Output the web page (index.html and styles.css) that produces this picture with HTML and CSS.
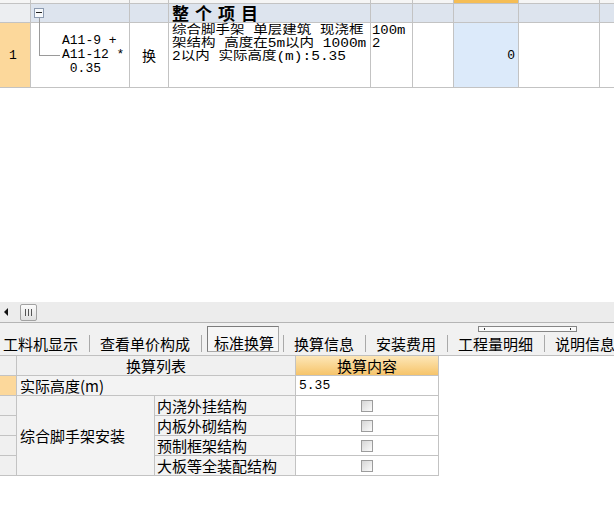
FILE: index.html
```html
<!DOCTYPE html>
<html>
	<head>
		<meta charset="utf-8">
		<title>标准换算</title>

		<link rel="stylesheet" href="styles.css">
	</head>

	<body>
		<div class="gridArea">
			<div class="grid">
				<!-- header row, scrolled almost out of view -->
				<div class="cell head"></div>
				<div class="cell head"></div>
				<div class="cell head"></div>
				<div class="cell head"></div>
				<div class="cell head"></div>
				<div class="cell head"></div>
				<div class="cell head sel"></div>
				<div class="cell head"></div>
				<div class="cell head"></div>

				<!-- group row -->
				<div class="cell group groupNum"></div>
				<div class="cell group"><span class="fold"></span></div>
				<div class="cell group"></div>
				<div class="cell group title">整个项目</div>
				<div class="cell group"></div>
				<div class="cell group"></div>
				<div class="cell group"></div>
				<div class="cell group"></div>
				<div class="cell group"></div>

				<!-- item row -->
				<div class="cell rowNum">1</div>
				<div class="cell code">A11-9 +
A11-12 *
 0.35</div>
				<div class="cell mark">换</div>
				<div class="cell name"><span class="wideText">综合脚手架 单层建筑 现浇框<br>架结构 高度在5m以内 1000m<br>2以内 实际高度(m):5.35</span></div>
				<div class="cell unit"><span class="wideText">100m<br>2</span></div>
				<div class="cell"></div>
				<div class="cell qty">0</div>
				<div class="cell"></div>
				<div class="cell"></div>
			</div>
		</div>

		<div class="hscroll">
			<span class="arrowLeft"></span>
			<div class="thumb"><span></span><span></span><span></span></div>
		</div>

		<div class="tabbar">
			<div class="tab first">工料机显示</div>
			<div class="sep"></div>
			<div class="tab">查看单价构成</div>
			<div class="sep"></div>
			<div class="tab active">标准换算</div>
			<div class="sep"></div>
			<div class="tab">换算信息</div>
			<div class="sep"></div>
			<div class="tab">安装费用</div>
			<div class="sep"></div>
			<div class="tab">工程量明细</div>
			<div class="sep"></div>
			<div class="tab">说明信息</div>
			<div class="grip"></div>
		</div>

		<div class="calc">
			<div class="rn"></div>
			<div class="hd wide">换算列表</div>
			<div class="hd orange">换算内容</div>

			<div class="rn cur"></div>
			<div class="lab wide">实际高度(m)</div>
			<div class="val">5.35</div>

			<div class="rn"></div>
			<div class="lab big">综合脚手架安装</div>
			<div class="sub">内浇外挂结构</div>
			<div class="chk"><span class="box"></span></div>

			<div class="rn"></div>
			<div class="sub">内板外砌结构</div>
			<div class="chk"><span class="box"></span></div>

			<div class="rn"></div>
			<div class="sub">预制框架结构</div>
			<div class="chk"><span class="box"></span></div>

			<div class="rn"></div>
			<div class="sub">大板等全装配结构</div>
			<div class="chk"><span class="box"></span></div>
		</div>
	</body>
</html>
```

FILE: styles.css
```css
body {
	margin: 0;
	width: 614px;
	height: 509px;
	overflow: hidden;
	background-color: #fff;
	color: #000;
	font-family: "Noto Sans CJK SC", sans-serif;
	font-size: 13px;
}

/* top grid */
.gridArea {
	height: 302px;
	overflow: hidden;
}

.grid {
	display: grid;
	grid-template-columns: 31px 99px 39px 202px 42px 41px 65px 81px 40px;
	grid-template-rows: 4px 19px 65px;
	width: 640px;
	font-family: "Liberation Mono", "Noto Sans CJK SC", monospace;
	font-size: 13px;
}

.cell {
	box-sizing: border-box;
	border-right: 1px solid #c3c3c3;
	border-bottom: 1px solid #c3c3c3;
}

.head {
	background-color: #f5f5f5;
}

.head.sel {
	background-color: #f5bd55;
}

.group {
	display: flex;
	align-items: center;
	background-color: #dde4ee;
}

.groupNum {
	background-color: #eceef1;
}

.fold {
	position: relative;
	width: 10px;
	height: 10px;
	margin-left: 3px;
	box-sizing: border-box;
	border: 1px solid #8d9bb0;
	background-color: #f7f9fb;
}

.fold::after {
	content: "";
	position: absolute;
	left: 1px;
	top: 3px;
	width: 6px;
	height: 1px;
	background-color: #222;
}

.title {
	padding-left: 3px;
	font-family: "Noto Sans CJK SC", sans-serif;
	font-size: 17px;
	font-weight: bold;
	letter-spacing: 6px;
	line-height: 18px;
}

.rowNum {
	display: flex;
	align-items: center;
	padding-left: 9px;
	background-color: #fcd89b;
}

.code {
	position: relative;
	display: flex;
	align-items: center;
	padding-left: 31px;
	white-space: pre;
	line-height: 14px;
}

/* tree connector from the group box */
.code::before {
	content: "";
	position: absolute;
	left: 8px;
	top: -5px;
	width: 20px;
	height: 37px;
	border-left: 1px solid #9a9a9a;
	border-bottom: 1px solid #9a9a9a;
}

.mark {
	display: flex;
	align-items: center;
	justify-content: center;
	font-size: 14px;
}

.name {
	padding: 2px 3px;
	font-size: 12.5px;
	line-height: 13px;
	white-space: nowrap;
}

/* the grid font is drawn wide and short */
.wideText {
	display: block;
	transform: scaleX(1.16);
	transform-origin: 0 0;
}

.unit {
	padding: 2px 1px;
	font-size: 12px;
	line-height: 13px;
}

.qty {
	display: flex;
	align-items: center;
	justify-content: flex-end;
	padding-right: 3px;
	background-color: #dceafa;
}

/* horizontal scrollbar */
.hscroll {
	display: flex;
	align-items: center;
	height: 20px;
	padding-left: 4px;
	background-color: #ececec;
	border-bottom: 1px solid #b5b5b5;
}

.arrowLeft {
	width: 0;
	height: 0;
	border-top: 4px solid transparent;
	border-bottom: 4px solid transparent;
	border-right: 4px solid #111;
}

.thumb {
	display: flex;
	align-items: center;
	justify-content: center;
	gap: 2px;
	width: 17px;
	height: 17px;
	margin-left: 12px;
	box-sizing: border-box;
	border: 1px solid #a2a2a2;
	border-radius: 2px;
	background: linear-gradient(#fbfbfb, #e0e0e0);
}

.thumb span {
	width: 1px;
	height: 7px;
	background-color: #555;
}

/* tabs */
.tabbar {
	position: relative;
	display: flex;
	align-items: flex-end;
	height: 33px;
	box-sizing: border-box;
	padding-bottom: 3px;
	background-color: #f1f1f1;
	border-bottom: 1px solid #c0c0c0;
	font-size: 15px;
	line-height: 16px;
	white-space: nowrap;
}

.tab {
	padding: 0 11px 0 10px;
}

.tab.first {
	padding-left: 3px;
}

.tab.active {
	margin: 0 4px 0 5px;
	padding: 8px 4px 0 6px;
	border: 1px solid #a8a8a8;
	border-top-color: #7c7c7c;
	border-left-color: #7c7c7c;
	background-color: #f6f6f6;
}

.sep {
	flex: none;
	width: 1px;
	height: 17px;
	background-color: #a9a9a9;
}

.grip {
	position: absolute;
	left: 478px;
	top: 3px;
	width: 99px;
	height: 6px;
	box-sizing: border-box;
	border: 1px solid #858585;
	background-color: #fafafa;
}

.grip::before,
.grip::after {
	content: "";
	position: absolute;
	top: 1px;
	width: 1px;
	height: 2px;
	background-color: #333;
}

.grip::before {
	left: 5px;
}

.grip::after {
	right: 5px;
}

/* conversion table */
.calc {
	display: grid;
	grid-template-columns: 17px 138px 141px 143px;
	grid-auto-rows: 20px;
	width: 439px;
	font-size: 15px;
	line-height: 19px;
}

.calc > div {
	box-sizing: border-box;
	border-right: 1px solid #c3c3c3;
	border-bottom: 1px solid #c3c3c3;
	white-space: nowrap;
}

.calc .wide {
	grid-column: span 2;
}

.rn {
	background-color: #f0f0f0;
}

.rn.cur {
	background-color: #fcd89b;
}

.hd {
	text-align: center;
	background-color: #f0f0f0;
}

.hd.orange {
	background: linear-gradient(#fde7b8, #f6c46a);
}

.lab {
	padding-left: 3px;
	background-color: #f3f3f3;
}

.lab.big {
	grid-row: span 4;
	display: flex;
	align-items: center;
}

.sub {
	padding-left: 2px;
	background-color: #f3f3f3;
}

.val {
	padding-left: 3px;
	font-family: "Liberation Mono", monospace;
	font-size: 13px;
}

.chk {
	display: flex;
	align-items: center;
	justify-content: center;
}

.box {
	width: 12px;
	height: 12px;
	box-sizing: border-box;
	border: 1px solid #9c9c9c;
	background: linear-gradient(135deg, #d6d6d6, #fbfbfb);
}
```
